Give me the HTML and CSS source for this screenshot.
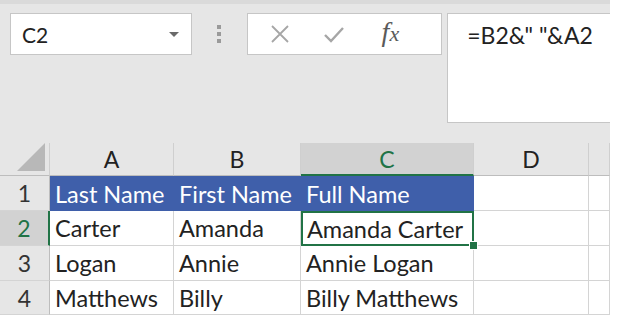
FILE: index.html
```html
<!DOCTYPE html>
<html lang="en">
<head>
    <meta charset="UTF-8">
    <title>Full Name</title>
    <link rel="stylesheet" href="styles.css">
</head>
<body>
    <div class="app">
        <div class="toolbar">
            <div class="namebox">
                <span>C2</span>
                <span class="arrow"></span>
            </div>
            <div class="grip">
                <span></span><span></span><span></span>
            </div>
            <div class="fnbox">
                <svg class="icon" width="22" height="22" viewBox="0 0 22 22">
                    <path d="M3 3 L19 19 M19 3 L3 19" stroke="#a6a6a6" stroke-width="1.8" fill="none"/>
                </svg>
                <svg class="icon" width="24" height="22" viewBox="0 0 24 22">
                    <path d="M3 12 L9 18 L21 5" stroke="#a6a6a6" stroke-width="2.4" fill="none"/>
                </svg>
                <span class="fx">f<i>x</i></span>
            </div>
            <div class="formula">=B2&amp;" "&amp;A2</div>
        </div>

        <!-- grade da planilha -->
        <div class="sheet">
            <div class="corner"><span class="tri"></span></div>
            <div class="colhead">A</div>
            <div class="colhead">B</div>
            <div class="colhead sel">C</div>
            <div class="colhead">D</div>
            <div class="colhead"></div>

            <div class="rowhead">1</div>
            <div class="cell title">Last Name</div>
            <div class="cell title">First Name</div>
            <div class="cell title">Full Name</div>
            <div class="cell"></div>
            <div class="cell"></div>

            <div class="rowhead sel">2</div>
            <div class="cell">Carter</div>
            <div class="cell">Amanda</div>
            <div class="cell active">Amanda Carter<span class="handle"></span></div>
            <div class="cell"></div>
            <div class="cell"></div>

            <div class="rowhead">3</div>
            <div class="cell">Logan</div>
            <div class="cell">Annie</div>
            <div class="cell">Annie Logan</div>
            <div class="cell"></div>
            <div class="cell"></div>

            <div class="rowhead">4</div>
            <div class="cell">Matthews</div>
            <div class="cell">Billy</div>
            <div class="cell">Billy Matthews</div>
            <div class="cell"></div>
            <div class="cell"></div>
        </div>
    </div>
</body>
</html>
```

FILE: styles.css
```css
* {
    box-sizing: border-box;
}
body {
    margin: 0;
    background-color: #ffffff;
    font-family: Lato, "Open Sans", sans-serif;
    color: #222;
}
.app {
    width: 610px;
    background-color: #e6e6e6;
    border-top: 4px solid #dadada;
}
.toolbar {
    display: flex;
    align-items: flex-start;
    padding: 9px 0 0 10px;
    height: 139px;
}
.namebox {
    width: 182px;
    height: 42px;
    background-color: #fff;
    border: 1px solid #c6c6c6;
    display: flex;
    align-items: center;
    justify-content: space-between;
    padding: 0 12px 0 11px;
    font-size: 21px;
}
.arrow {
    width: 0;
    height: 0;
    border-left: 5px solid transparent;
    border-right: 5px solid transparent;
    border-top: 5px solid #6a6a6a;
}
.grip {
    width: 55px;
    display: flex;
    flex-direction: column;
    align-items: center;
    gap: 3px;
    padding-top: 12px;
}
.grip span {
    width: 4px;
    height: 4px;
    background-color: #9a9a9a;
}
.fnbox {
    width: 196px;
    height: 42px;
    background-color: #fff;
    border: 1px solid #c6c6c6;
    display: flex;
    align-items: center;
    padding-left: 21px;
    gap: 31px;
}
.fx {
    font-family: "Liberation Serif", serif;
    font-style: italic;
    font-size: 28px;
    color: #5a5a5a;
    margin-left: 5px;
    margin-top: -4px;
}
.fx i {
    font-size: 22px;
}
.formula {
    margin-left: 5px;
    width: 163px;
    height: 110px;
    background-color: #fff;
    border: 1px solid #c6c6c6;
    border-right: none;
    padding: 7px 0 0 19px;
    font-size: 23px;
    white-space: nowrap;
    overflow: hidden;
}
.sheet {
    display: grid;
    grid-template-columns: 50px 124px 127px 173px 115px 21px;
    grid-template-rows: 33px 35px 35px 35px 34px;
    background-color: #fff;
}
.corner, .colhead, .rowhead {
    background-color: #e6e6e6;
    border-right: 1px solid #cfcfcf;
    border-bottom: 1px solid #bdbdbd;
    display: flex;
    align-items: center;
    justify-content: center;
    font-size: 23px;
}
.corner {
    align-items: flex-end;
    justify-content: flex-end;
    padding: 0 4px 4px 0;
}
.tri {
    width: 0;
    height: 0;
    border-left: 28px solid transparent;
    border-bottom: 28px solid #b8b8b8;
}
.colhead.sel {
    background-color: #d2d2d2;
    color: #217346;
    border-bottom: 2px solid #217346;
}
.rowhead {
    border-bottom: 1px solid #d4d4d4;
    border-right: 1px solid #bdbdbd;
    color: #333;
}
.rowhead.sel {
    background-color: #d2d2d2;
    color: #217346;
    border-right: 2px solid #217346;
}
.cell {
    border-right: 1px solid #d4d4d4;
    border-bottom: 1px solid #d4d4d4;
    font-size: 23.5px;
    padding-left: 5px;
    display: flex;
    align-items: center;
    white-space: nowrap;
    position: relative;
}
.cell.title {
    background-color: #3f5faa;
    color: #fff;
    border-right: none;
    border-bottom: none;
}
.cell.active {
    border: 2px solid #217346;
    padding-left: 4px;
    z-index: 2;
}
.handle {
    position: absolute;
    right: -6px;
    bottom: -6px;
    width: 9px;
    height: 9px;
    background-color: #217346;
    border: 1px solid #fff;
}
```
